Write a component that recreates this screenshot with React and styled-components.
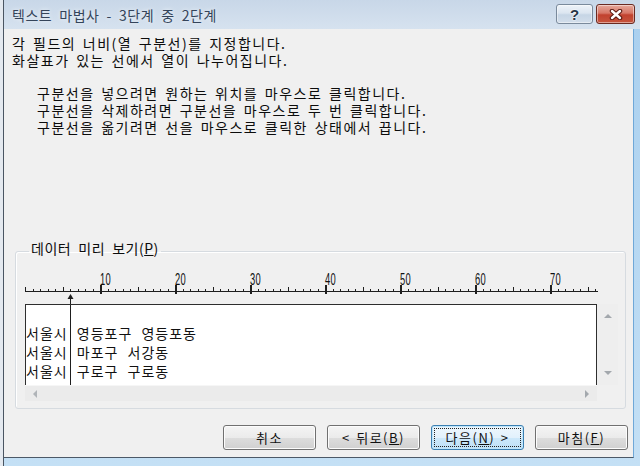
import React from 'react';
import styled, { createGlobalStyle } from 'styled-components';

const Global = createGlobalStyle`
  html, body { margin: 0; padding: 0; background: #fff; overflow: hidden; }
  *, *::before, *::after { box-sizing: border-box; }
`;

const KR = `'Noto Sans CJK KR', 'Noto Sans', sans-serif`;

const Frame = styled.div`
  width: 640px;
  height: 466px;
  display: flex;
  flex-direction: column;
  padding-left: 4px;
  padding-bottom: 8px;
  background:
    linear-gradient(to right, #e4e9ef 0 3px, #4a5562 3px 4px, transparent 4px),
    linear-gradient(to bottom, #a9cfee, #c4e0f5);
`;

const TitleBar = styled.div`
  height: 29px;
  flex-shrink: 0;
  display: flex;
  align-items: center;
  padding: 0 5px 0 8px;
  background: linear-gradient(to bottom, #c8d7e8, #d6e2ef);
`;

const Title = styled.div`
  flex: 1;
  font-family: ${KR};
  font-size: 14px;
  letter-spacing: 0.5px;
  word-spacing: 3.5px;
  color: #34445a;
  text-shadow: 0 0 4px rgba(255, 255, 255, 0.8);
`;

const CaptionButtons = styled.div`
  display: flex;
  gap: 3px;
  margin-top: -1px;
`;

const CaptionButton = styled.div`
  width: ${(p) => (p.$close ? 39 : 37)}px;
  height: 20px;
  border-radius: 3px;
  display: flex;
  align-items: center;
  justify-content: center;
  border: 1px solid ${(p) => (p.$close ? '#6a2a22' : '#7a8a9c')};
  box-shadow: inset 0 0 0 1px rgba(255, 255, 255, 0.45);
  background: ${(p) =>
    p.$close
      ? 'linear-gradient(to bottom, #e6a99c 0%, #d77767 45%, #c2422f 55%, #c6553f 100%)'
      : 'linear-gradient(to bottom, #eef3f9 0%, #dbe5f0 45%, #c6d5e5 55%, #d2deeb 100%)'};
  font-family: 'Liberation Sans', sans-serif;
  font-weight: bold;
  font-size: 15px;
  color: #283646;
  text-shadow: 0 0 2px #fff, 0 0 2px #fff;
`;

const Client = styled.div`
  flex: 1;
  display: flex;
  flex-direction: column;
  margin-right: 6px;
  background: #f0f0f0;
  border-right: 1px solid #6fa8d8;
  border-bottom: 1px solid #4c5967;
  padding-bottom: 7px;
  font-family: ${KR};
  font-size: 14px;
  letter-spacing: 0.5px;
  word-spacing: 3.5px;
  color: #0c0c0c;
`;

const TextBlock = styled.div`
  padding-left: ${(p) => p.$indent}px;
  margin-top: ${(p) => p.$top}px;
  line-height: 17px;
  letter-spacing: 1.5px;
  word-spacing: 2px;
`;

const Group = styled.fieldset`
  margin: auto 7px 0 11px;
  padding: 9px 7px 7px 9px;
  min-width: 0;
  border: 1px solid #d6dbe0;
  border-radius: 3px;
  box-shadow: inset 1px 1px 0 #fff;
`;

const Legend = styled.legend`
  margin-left: 4px;
  padding: 0 2px 6px;
  line-height: 16px;
`;

const RulerSvg = styled.svg`
  display: block;
  width: 100%;
  height: 33px;
`;

const Preview = styled.div`
  display: grid;
  grid-template-columns: 1fr 21px;
  grid-template-rows: 81px 16px;
`;

const TextArea = styled.div`
  position: relative;
  overflow: hidden;
  background: #fff;
  border-top: 1px solid #2e2e2e;
  border-left: 1px solid #2e2e2e;
  border-right: 1px solid #2e2e2e;
`;

const DataRow = styled.div`
  height: 19px;
  line-height: 19px;
  white-space: pre;
  font-size: 14px;
  letter-spacing: 1px;
  word-spacing: 5px;
  color: #111;
`;

const ColumnBreak = styled.div`
  position: absolute;
  top: 0;
  bottom: 0;
  left: 44px;
  width: 1px;
  background: #1e1e1e;
`;

const VScroll = styled.div`
  display: flex;
  flex-direction: column;
  align-items: center;
  justify-content: space-between;
  padding: 10px 0;
  background: #eeeeee;
`;

const HScroll = styled.div`
  display: flex;
  align-items: center;
  justify-content: space-between;
  padding: 0 8px;
  background: #ebebeb;
  border-top: 1px solid #f6f6f6;
`;

const Corner = styled.div`
  background: #f0f0f0;
`;

const Arrow = styled.span`
  width: 0;
  height: 0;
  border-style: solid;
  border-color: transparent;
  ${(p) =>
    p.$dir === 'up'
      ? 'border-width: 0 4px 4px 4px; border-bottom-color: #a3a8ad;'
      : p.$dir === 'down'
      ? 'border-width: 4px 4px 0 4px; border-top-color: #a3a8ad;'
      : p.$dir === 'left'
      ? 'border-width: 4px 4px 4px 0; border-right-color: #b0b4b8;'
      : 'border-width: 4px 0 4px 4px; border-left-color: #a3a8ad;'}
`;

const ButtonRow = styled.div`
  display: flex;
  justify-content: flex-end;
  gap: 11px;
  margin-top: 16px;
  padding-right: 5px;
`;

const Button = styled.div`
  width: 93px;
  height: 25px;
  border-radius: 3px;
  padding: 2px;
  display: flex;
  border: 1px solid ${(p) => (p.$default ? '#3c7fb1' : '#707070')};
  box-shadow: inset 0 0 0 1px ${(p) => (p.$default ? '#bfe6fb' : '#fcfcfc')};
  background: ${(p) =>
    p.$default
      ? 'linear-gradient(to bottom, #eef7fd 0%, #e2f1fc 50%, #cde8fa 51%, #bfe1f7 100%)'
      : 'linear-gradient(to bottom, #f4f4f4 0%, #ebebeb 50%, #dddddd 51%, #d0d0d0 100%)'};
`;

const ButtonLabel = styled.span`
  flex: 1;
  display: flex;
  align-items: center;
  justify-content: center;
  font-size: 13px;
  letter-spacing: 1.5px;
  word-spacing: 1px;
  color: #111;
  border: 1px dotted ${(p) => (p.$focus ? '#222' : 'transparent')};
`;

function Ruler() {
  const ticks = [];
  const labels = [];
  for (let c = 0; c <= 76; c++) {
    const x = Math.round(c * 7.5);
    if (c % 10 === 0 && c > 0) {
      ticks.push(<rect key={c} x={x} y={14} width={2} height={9} />);
      labels.push(
        <text
          key={'t' + c}
          x={x}
          y={14}
          textLength={11}
          lengthAdjust="spacingAndGlyphs"
          fontFamily="'Liberation Sans', sans-serif"
          fontSize="16"
          fill="#111"
        >
          {c}
        </text>
      );
    } else if (c % 5 === 0) {
      ticks.push(<rect key={c} x={x} y={16} width={1} height={4} />);
    } else {
      ticks.push(<rect key={c} x={x} y={18} width={1} height={2} />);
    }
  }
  return (
    <RulerSvg viewBox="0 0 593 33" preserveAspectRatio="xMinYMin" shapeRendering="crispEdges">
      <g fill="#1e1e1e">
        <rect x={0} y={20} width={573} height={1} />
        {ticks}
        <polygon points="45.5,23 42.5,28 48.5,28" shapeRendering="auto" />
        <rect x={45} y={27} width={1} height={6} />
      </g>
      {labels}
    </RulerSvg>
  );
}

function CloseGlyph() {
  return (
    <svg width="14" height="11" viewBox="0 0 14 11">
      <path d="M3 2 L11 9 M11 2 L3 9" stroke="#5a1a12" strokeWidth="4.5" strokeLinecap="round" />
      <path d="M3 2 L11 9 M11 2 L3 9" stroke="#fff" strokeWidth="2.4" strokeLinecap="round" />
    </svg>
  );
}

const rows = ['\u00a0', '서울시 영등포구 영등포동', '서울시 마포구 서강동', '서울시 구로구 구로동'];

export default function App() {
  return (
    <>
      <Global />
      <Frame>
        <TitleBar>
          <Title>텍스트 마법사 - 3단계 중 2단계</Title>
          <CaptionButtons>
            <CaptionButton>?</CaptionButton>
            <CaptionButton $close>
              <CloseGlyph />
            </CaptionButton>
          </CaptionButtons>
        </TitleBar>
        <Client>
          <TextBlock $indent={8} $top={6}>
            <div>각 필드의 너비(열 구분선)를 지정합니다.</div>
            <div>화살표가 있는 선에서 열이 나누어집니다.</div>
          </TextBlock>
          <TextBlock $indent={33} $top={16}>
            <div>구분선을 넣으려면 원하는 위치를 마우스로 클릭합니다.</div>
            <div>구분선을 삭제하려면 구분선을 마우스로 두 번 클릭합니다.</div>
            <div>구분선을 옮기려면 선을 마우스로 클릭한 상태에서 끕니다.</div>
          </TextBlock>
          <Group>
            <Legend>
              데이터 미리 보기(<u>P</u>)
            </Legend>
            <Ruler />
            <Preview>
              <TextArea>
                {rows.map((r, i) => (
                  <DataRow key={i}>{r}</DataRow>
                ))}
                <ColumnBreak />
              </TextArea>
              <VScroll>
                <Arrow $dir="up" />
                <Arrow $dir="down" />
              </VScroll>
              <HScroll>
                <Arrow $dir="left" />
                <Arrow $dir="right" />
              </HScroll>
              <Corner />
            </Preview>
          </Group>
          <ButtonRow>
            <Button>
              <ButtonLabel>취소</ButtonLabel>
            </Button>
            <Button>
              <ButtonLabel>
                &lt; 뒤로(<u>B</u>)
              </ButtonLabel>
            </Button>
            <Button $default>
              <ButtonLabel $focus>
                다음(<u>N</u>) &gt;
              </ButtonLabel>
            </Button>
            <Button>
              <ButtonLabel>
                마침(<u>F</u>)
              </ButtonLabel>
            </Button>
          </ButtonRow>
        </Client>
      </Frame>
    </>
  );
}
